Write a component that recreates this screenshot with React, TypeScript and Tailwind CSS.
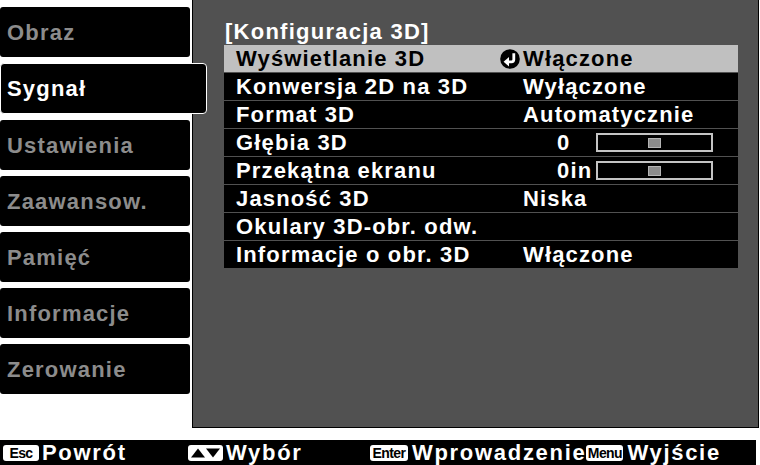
import React from 'react'

const tabs = [
    { label: 'Obraz', active: false },
    { label: 'Sygnał', active: true },
    { label: 'Ustawienia', active: false },
    { label: 'Zaawansow.', active: false },
    { label: 'Pamięć', active: false },
    { label: 'Informacje', active: false },
    { label: 'Zerowanie', active: false },
]

interface Row {
    label: string
    value?: string
    slider?: boolean
    selected?: boolean
}

const rows: Row[] = [
    { label: 'Wyświetlanie 3D', value: 'Włączone', selected: true },
    { label: 'Konwersja 2D na 3D', value: 'Wyłączone' },
    { label: 'Format 3D', value: 'Automatycznie' },
    { label: 'Głębia 3D', value: '0', slider: true },
    { label: 'Przekątna ekranu', value: '0in', slider: true },
    { label: 'Jasność 3D', value: 'Niska' },
    { label: 'Okulary 3D-obr. odw.' },
    { label: 'Informacje o obr. 3D', value: 'Włączone' },
]

function EnterMark() {
    return (
        <svg width="20" height="20" viewBox="0 0 20 20" className="shrink-0">
            <circle cx="10" cy="10" r="9.8" fill="#000" />
            <path d="M13.8 4.2 V10.5 Q13.8 12.8 11.5 12.8 H8" stroke="#fff" strokeWidth="2.8" fill="none" />
            <polygon points="3.6,12.8 9,8 9,17.6" fill="#fff" />
        </svg>
    )
}

function Slider() {
    return (
        <div className="w-[117px] h-[19px] border-2 border-[#c4c4c4] bg-black flex items-center justify-center">
            <div className="w-[13px] h-[10px] bg-[#8c8c8c] border border-[#b4b4b4]" />
        </div>
    )
}

function Key({ children, w }: { children: React.ReactNode; w: string }) {
    return (
        <span className={`${w} h-[16px] bg-white rounded-[3px] text-black text-[14px] leading-[16px] tracking-[-0.6px] flex items-center justify-center shrink-0`}>
            {children}
        </span>
    )
}

export default function App() {
    return (
        <div
            className="w-[760px] h-[465px] bg-white overflow-hidden flex flex-col font-bold"
            style={{ fontFamily: '"Liberation Sans", Arial, sans-serif' }}
        >
            <div className="flex h-[440px]">
                <div className="w-[192px] shrink-0 pt-[7px] flex flex-col gap-[6px]">
                    {tabs.map((tab) =>
                        tab.active ? (
                            <div
                                key={tab.label}
                                className="relative z-10 w-[207px] h-[51px] bg-black border border-white rounded-[4px] flex items-center pl-[6px] text-white text-[22px] tracking-[1.2px]"
                            >
                                {tab.label}
                            </div>
                        ) : (
                            <div
                                key={tab.label}
                                className="w-[190px] h-[50px] bg-black rounded-[3px] flex items-center pl-[7px] text-[#8c8c8c] text-[22px] tracking-[1.2px]"
                            >
                                {tab.label}
                            </div>
                        )
                    )}
                </div>
                <div className="w-[567px] h-[428px] shrink-0 bg-[#515151] border-l border-r border-b border-black pl-[31px] pt-[19px]">
                    <div className="text-white text-[22px] leading-[26px] tracking-[1.25px] pl-[1px]">[Konfiguracja 3D]</div>
                    <div className="w-[514px] flex flex-col gap-[1px]">
                        {rows.map((row) => (
                            <div
                                key={row.label}
                                className={`h-[27px] flex items-center text-[22px] tracking-[1.15px] ${row.selected ? 'bg-[#c0c0c0] text-black' : 'bg-black text-white'}`}
                            >
                                <div className="w-[276px] pl-[12px] whitespace-nowrap">{row.label}</div>
                                {row.selected ? (
                                    <div className="flex items-center gap-[3px]">
                                        <EnterMark />
                                        <span>{row.value}</span>
                                    </div>
                                ) : row.slider ? (
                                    <div className="flex items-center">
                                        <span className="w-[96px] pl-[57px]">{row.value}</span>
                                        <Slider />
                                    </div>
                                ) : (
                                    <div className="pl-[23px]">{row.value}</div>
                                )}
                            </div>
                        ))}
                    </div>
                </div>
            </div>
            <div className="w-[756px] h-[25px] bg-black flex items-center pl-[3px] text-white text-[22px] tracking-[1.7px]">
                <div className="w-[185px] flex items-center gap-[3px]">
                    <Key w="w-[36px]">Esc</Key>
                    <span>Powrót</span>
                </div>
                <div className="w-[182px] flex items-center gap-[3px]">
                    <span className="w-[35px] h-[16px] shrink-0">
                        <svg width="35" height="16" viewBox="0 0 35 16">
                            <rect width="35" height="16" rx="3" fill="#fff" />
                            <polygon points="3,12.5 10,3.5 17,12.5" fill="#000" />
                            <polygon points="18,3.5 32,3.5 25,12.5" fill="#000" />
                        </svg>
                    </span>
                    <span>Wybór</span>
                </div>
                <div className="flex items-center gap-[4px]">
                    <Key w="w-[38px]">Enter</Key>
                    <span>Wprowadzenie</span>
                </div>
                <div className="flex items-center gap-[4px]">
                    <Key w="w-[37px]">Menu</Key>
                    <span>Wyjście</span>
                </div>
            </div>
        </div>
    )
}
